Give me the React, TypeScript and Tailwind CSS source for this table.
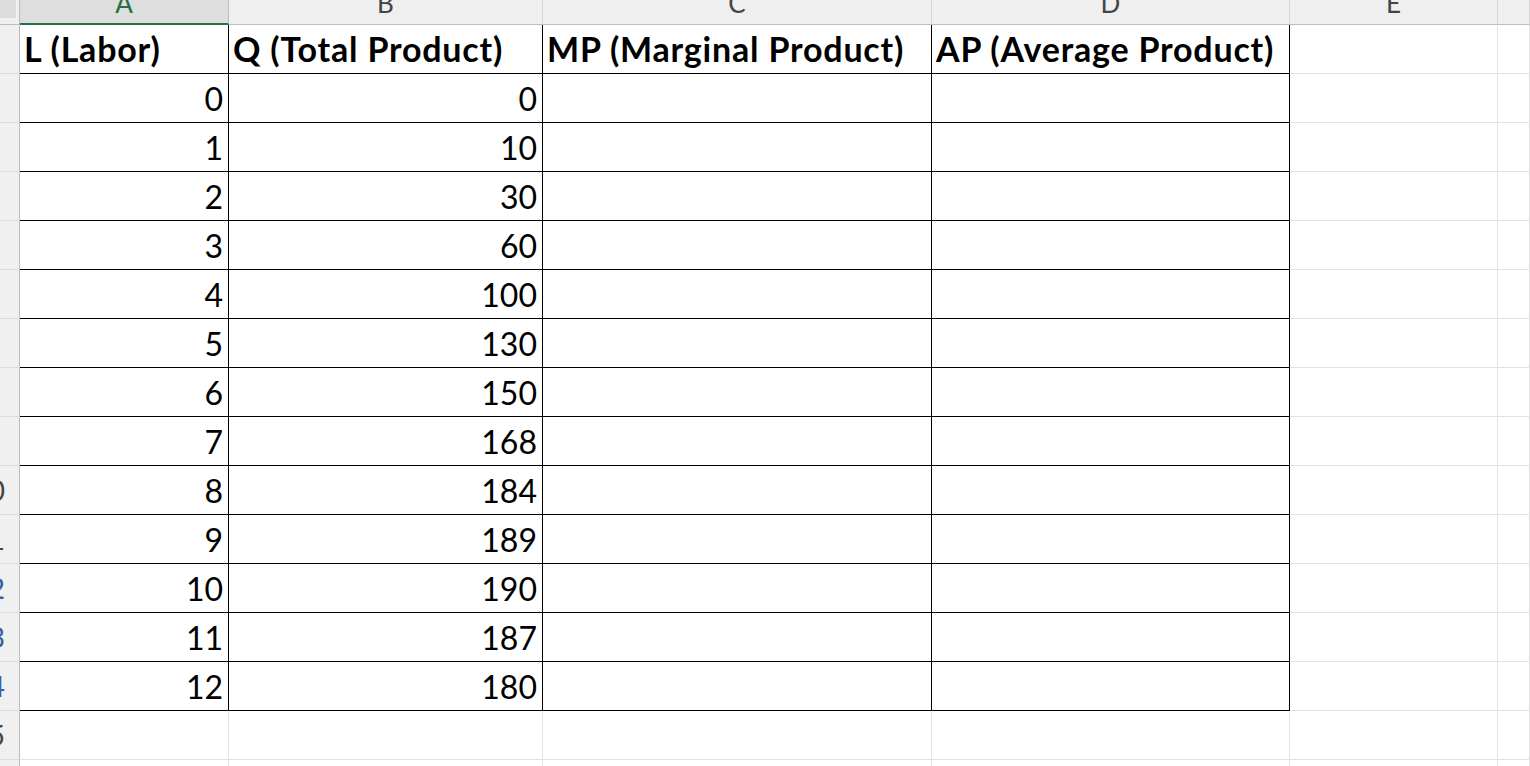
import React from "react";

// sheet columns: row header + A..E + the next one cut off at the right edge
const cols = ["A", "B", "C", "D", "E", ""];

const headers = [
  "L (Labor)",
  "Q (Total Product)",
  "MP (Marginal Product)",
  "AP (Average Product)",
];

const data: [number, number][] = [
  [0, 0],
  [1, 10],
  [2, 30],
  [3, 60],
  [4, 100],
  [5, 130],
  [6, 150],
  [7, 168],
  [8, 184],
  [9, 189],
  [10, 190],
  [11, 187],
  [12, 180],
];

const RowHead = ({ n }: { n: number }) => {
  // row numbers are scrolled off to the left, only the last digit peeks out
  const blue = n >= 12 && n <= 14;
  return (
    <div className="flex h-[49px] items-center justify-end overflow-hidden border-r border-b border-r-[#bcbcbc] border-b-[#dadada] bg-[#f0f0f0] pr-[14px]">
      {n >= 10 && (
        <span
          className={
            "whitespace-nowrap text-[28px] leading-none " +
            (blue ? "text-[#3b5f9a]" : "text-[#444444]")
          }
        >
          {n}
        </span>
      )}
    </div>
  );
};

const Cell = ({
  children,
  boxed,
  bold,
  right,
}: {
  children?: React.ReactNode;
  boxed?: boolean;
  bold?: boolean;
  right?: boolean;
}) => (
  <div
    className={
      "flex h-[49px] items-end overflow-visible whitespace-nowrap border-r border-b pb-[7px] leading-none text-black " +
      (boxed ? "border-black " : "border-[#e1e1e1] ") +
      (bold ? "text-[34px] font-bold tracking-[0.8px] " : "text-[32px] ") +
      (right ? "justify-end pr-[5px]" : "justify-start pl-[4px]")
    }
  >
    {children}
  </div>
);

export default function App() {
  const rows: React.ReactNode[] = [];

  // row 1 - labels
  rows.push(
    <React.Fragment key="r1">
      <RowHead n={1} />
      {headers.map((h) => (
        <Cell key={h} boxed bold>
          {h}
        </Cell>
      ))}
      <Cell />
      <Cell />
    </React.Fragment>
  );

  // rows 2..14 - values
  data.map(([l, q], i) =>
    rows.push(
      <React.Fragment key={"r" + (i + 2)}>
        <RowHead n={i + 2} />
        <Cell boxed right>
          {l}
        </Cell>
        <Cell boxed right>
          {q}
        </Cell>
        <Cell boxed />
        <Cell boxed />
        <Cell />
        <Cell />
      </React.Fragment>
    )
  );

  // empty rows below the table
  [15, 16].map((n) =>
    rows.push(
      <React.Fragment key={"r" + n}>
        <RowHead n={n} />
        <Cell />
        <Cell />
        <Cell />
        <Cell />
        <Cell />
        <Cell />
      </React.Fragment>
    )
  );

  return (
    <div className="h-[766px] w-[1530px] overflow-hidden bg-white font-['Lato',sans-serif]">
      <div className="grid grid-cols-[20px_209px_314px_389px_358px_208px_1fr]">
        {/* select-all corner */}
        <div className="h-[25px] border-r border-b border-r-[#bcbcbc] border-b-[#bdbdbd] bg-[#f0f0f0]">
          <div className="h-[18px] w-[16px] bg-[#dcdcdc]" />
        </div>
        {cols.map((c) =>
          c === "A" ? (
            <div
              key={c}
              className="flex h-[25px] items-end justify-center overflow-hidden border-r border-b-2 border-r-[#bdbdbd] border-b-[#217346] bg-[#dedede] pb-[7px]"
            >
              <span className="text-[26px] leading-none text-[#217346]">
                {c}
              </span>
            </div>
          ) : (
            <div
              key={c || "next"}
              className="flex h-[25px] items-end justify-center overflow-hidden border-r border-b border-r-[#d6d6d6] border-b-[#bdbdbd] bg-[#efefef] pb-[8px]"
            >
              <span className="text-[26px] leading-none text-[#444444]">
                {c}
              </span>
            </div>
          )
        )}
        {rows}
      </div>
    </div>
  );
}
